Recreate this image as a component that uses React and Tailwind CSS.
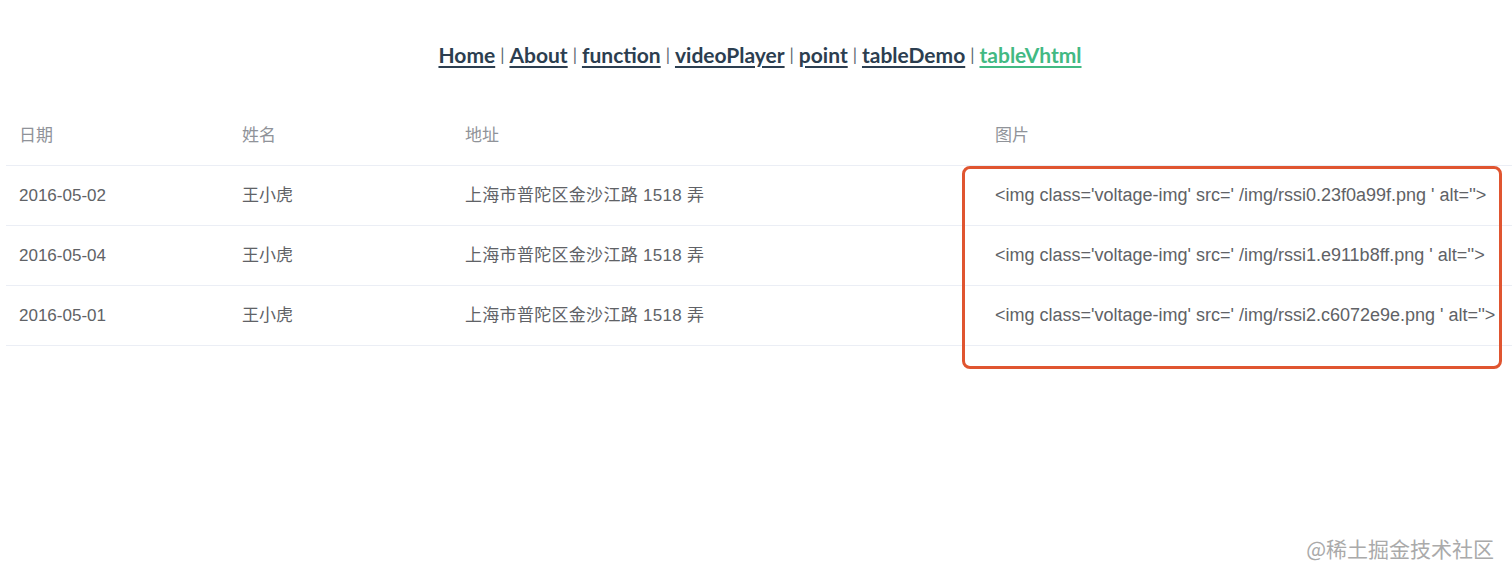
import React from "react";

const rows = [
  { date: "2016-05-02", name: "王小虎", addr: "上海市普陀区金沙江路 1518 弄", img: "<img class='voltage-img' src=' /img/rssi0.23f0a99f.png ' alt=''>" },
  { date: "2016-05-04", name: "王小虎", addr: "上海市普陀区金沙江路 1518 弄", img: "<img class='voltage-img' src=' /img/rssi1.e911b8ff.png ' alt=''>" },
  { date: "2016-05-01", name: "王小虎", addr: "上海市普陀区金沙江路 1518 弄", img: "<img class='voltage-img' src=' /img/rssi2.c6072e9e.png ' alt=''>" },
];

const links = ["Home", "About", "function", "videoPlayer", "point", "tableDemo"];

const App = () => {
  return (
    <div className="relative w-[1512px] h-[577px] bg-white overflow-hidden font-['Liberation_Sans','Noto_Sans_CJK_SC',sans-serif]">
      <nav className="pt-[41px] h-[106px] flex items-start justify-center text-[21px] font-['Lato','Noto_Sans',sans-serif] leading-[28px]">
        <div className="flex items-center ml-[8px]">
          {links.map((l) => (
            <React.Fragment key={l}>
              <a className="font-bold text-[#2c3e50] underline underline-offset-[3px]">{l}</a>
              <span className="text-[#5a6570] font-normal mx-[5px] text-[17px]">|</span>
            </React.Fragment>
          ))}
          <a className="font-bold text-[#42b983] underline underline-offset-[3px]">tableVhtml</a>
        </div>
      </nav>

      <div className="ml-[6px] w-[1506px] text-[17px]">
        <div className="grid grid-cols-[223px_223px_530px_1fr] h-[60px] items-center border-b border-[#ebeef5] text-[#909399]">
          <div className="pl-[13px]">日期</div>
          <div className="pl-[13px]">姓名</div>
          <div className="pl-[13px]">地址</div>
          <div className="pl-[13px]">图片</div>
        </div>
        {rows.map((r, i) => (
          <div key={i} className="grid grid-cols-[223px_223px_530px_1fr] h-[60px] items-center border-b border-[#ebeef5] text-[#606266]">
            <div className="pl-[13px]">{r.date}</div>
            <div className="pl-[13px]">{r.name}</div>
            <div className="pl-[13px] tracking-[0.3px]">{r.addr}</div>
            <div className="pl-[13px] whitespace-nowrap text-[18px]">{r.img}</div>
          </div>
        ))}
      </div>

      {/* highlight box */}
      <div className="absolute left-[962px] top-[166px] w-[540px] h-[203px] border-[3px] border-[#e05530] rounded-[8px]"></div>

      <div className="absolute right-[18px] top-[533px] text-[21px] text-[#aaaaaa] font-['Noto_Sans_CJK_SC',sans-serif]">@稀土掘金技术社区</div>
    </div>
  );
};

export default App;
